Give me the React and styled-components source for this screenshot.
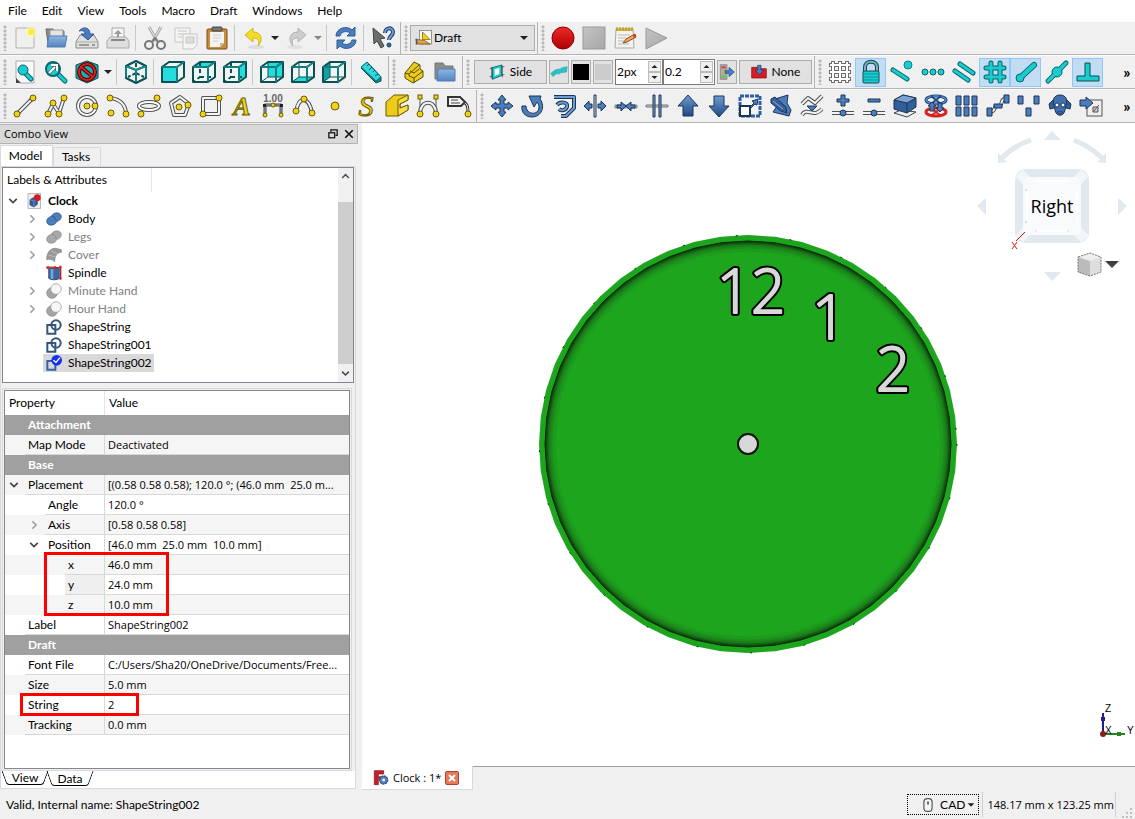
import React from "react"
import styled, { createGlobalStyle, css } from "styled-components"

/* ---------- drawing helpers ---------- */

const TEAL = "#18cccf"
const YELLOW = "#f0d21c"
const BLUE = "#4a7dbb"
const NAVY = "#1d3557"

const Pipe = ({ d, c = "#f4f4f2", o = "#4d5355", w = 3 }) => (
  <g fill="none" strokeLinejoin="round">
    <path d={d} stroke={o} strokeWidth={w} />
    <path d={d} stroke={c} strokeWidth={w - 2} />
  </g>
)

const Dot = ({ x, y, r = 3, c = YELLOW, o = "#6b5d00" }) => (
  <circle cx={x} cy={y} r={r} fill={c} stroke={o} />
)

const Bar = ({ d, w = 5, c = TEAL, o = "#0b6468" }) => (
  <g fill="none" strokeLinecap="round">
    <path d={d} stroke={o} strokeWidth={w} />
    <path d={d} stroke={c} strokeWidth={w - 2} />
  </g>
)

const cubeFaces = {
  front: "M1 7H16V22H1Z",
  top: "M1 7L8 2H23L16 7Z",
  right: "M16 7L23 2V17L16 22Z",
  rear: "M8 2H23V17H8Z",
  bottom: "M1 22L8 17H23L16 22Z",
  left: "M1 7L8 2V17L1 22Z",
}

const Cube = ({ face }) => {
  const solid = face === "rear" || face === "bottom" || face === "left"
  return (
    <g strokeLinejoin="round">
      <path d="M1 7L8 2H23V17L16 22H1Z" fill="#eef6f6" />
      <path d={cubeFaces[face]} fill={face === "left" ? "#0fa3a6" : "#22dcdd"} />
      {face !== "front" && (
        <path
          d="M8 2V17L1 22M8 17H23"
          fill="none"
          stroke="#0b4f53"
          strokeWidth={solid ? 1 : 2}
          strokeDasharray={solid ? "none" : "4 3"}
        />
      )}
      <path
        d="M1 7H16V22H1ZM1 7L8 2H23L16 7M23 2V17L16 22"
        fill="none"
        stroke="#0b4f53"
        strokeWidth="2"
      />
      <path d="M1 7H16V22M16 7L23 2" fill="none" stroke="#1fa9ad" strokeWidth="1" />
      {face === "front" && <path d="M3 9H14V20H3Z" fill="#22dcdd" />}
    </g>
  )
}

const icons = {
  new: (
    <g>
      <rect x="3" y="2" width="18" height="20" rx="1" fill="#efefed" stroke="#b0b0ac" />
      <circle cx="18" cy="6" r="6" fill="#fdf6a0" opacity=".6" />
      <circle cx="18" cy="6" r="3" fill="#fbec3a" />
    </g>
  ),
  open: (
    <g>
      <path d="M2 3H9L11 5H20V17H4Z" fill="#8b8b87" stroke="#666" />
      <path d="M6 4H19V12H6Z" fill="#e4e4e4" stroke="#999" />
      <path d="M5 10H23L21 21H3Z" fill="url(#gBlue)" stroke="#4f7fb9" />
    </g>
  ),
  save: (
    <g>
      <path d="M5 9H19L23 16V22H1V16Z" fill="#e0e0de" stroke="#8b8b87" />
      <path d="M2 16H22" stroke="#aaa" />
      <path d="M4 19H14M17 19H20" stroke="#9b9b97" strokeWidth="2" />
      <path d="M4 5C8 0 15 1 15 8H19L13 14L6 8H10C10 5 8 4 4 5Z" fill={BLUE} stroke="#2c5a99" />
    </g>
  ),
  print: (
    <g stroke="#aaa">
      <path d="M6 2H18V13H6Z" fill="#f6f6f6" />
      <path d="M4 11H20L23 15V22H1V15Z" fill="#dededc" />
      <path d="M5 14H19" stroke="#888" strokeWidth="2" />
      <path d="M12 4L8 8H11V11H13V8H16Z" fill="#999" stroke="none" />
    </g>
  ),
  cut: (
    <g fill="none">
      <path d="M6 1L14 15M18 1L10 15" stroke="#aaa" strokeWidth="3" />
      <path d="M6 1L14 15M18 1L10 15" stroke="#e8e8e8" />
      <circle cx="6" cy="19" r="4" stroke="#777" strokeWidth="2" />
      <circle cx="18" cy="19" r="4" stroke="#777" strokeWidth="2" />
      <path d="M9 16L12 12L15 16" stroke="#777" strokeWidth="2" />
    </g>
  ),
  copy: (
    <g fill="#f4f4f3" stroke="#c6c6c4">
      <path d="M1 2H16V16H1Z" />
      <path d="M4 5H13M4 8H13M4 11H8" />
      <path d="M9 8H23V19L19 23H9Z" />
      <path d="M12 11H20V17H12Z" fill="#ddd" />
    </g>
  ),
  paste: (
    <g>
      <rect x="2" y="3" width="20" height="20" rx="1" fill="#c88d3a" stroke="#7a5116" />
      <path d="M5 6H19V17L15 21H5Z" fill="#f3f3f3" />
      <path d="M8 9H16M8 12H16M8 15H13" stroke="#ccc" />
      <path d="M15 21V17H19Z" fill="#bbb" />
      <rect x="7" y="1" width="10" height="4" rx="1" fill="#777" stroke="#444" />
    </g>
  ),
  undo: (
    <g>
      <ellipse cx="14" cy="21" rx="8" ry="2" fill="#ddd" />
      <path d="M3 9L11 2V6C19 6 22 13 16 20C18 14 16 12 11 12V16Z" fill="#f2dc2a" stroke="#d4b713" />
    </g>
  ),
  redo: (
    <g>
      <ellipse cx="10" cy="21" rx="8" ry="2" fill="#e2e2e2" />
      <path d="M21 9L13 2V6C5 6 2 13 8 20C6 14 8 12 13 12V16Z" fill="#cdcdcb" stroke="#b3b3b1" />
    </g>
  ),
  refresh: (
    <g fill={BLUE} stroke="#2c5a99">
      <path d="M2 10C2 2 13 -1 18 4L21 1V10H13L16 7C12 4 7 6 6 10Z" />
      <path d="M22 14C22 22 11 25 6 20L3 23V14H11L8 17C12 20 17 18 18 14Z" />
    </g>
  ),
  whats: (
    <g>
      <path d="M2 2L14 12L9 13L13 20L10 22L6 15L3 18Z" fill="#6a6e6e" stroke="#3e4446" />
      <path d="M14 7C14 1 22 1 22 6C22 10 18 10 18 14" fill="none" stroke="#1c3c72" strokeWidth="4" />
      <path d="M14 7C14 1 22 1 22 6C22 10 18 10 18 14" fill="none" stroke="#6f9bd1" strokeWidth="2" />
      <circle cx="18" cy="19" r="2" fill="#3465a4" stroke="#1c3c72" />
    </g>
  ),
  record: <circle cx="12" cy="12" r="11" fill="url(#gRed)" stroke="#8a0000" />,
  stop: <rect x="1" y="1" width="22" height="22" fill="url(#gGrey)" stroke="#999" />,
  macro: (
    <g>
      <path d="M3 3H20L21 22H2Z" fill="#f2f2ef" stroke="#aaa" />
      <path d="M3 2H20V5H3Z" fill="#d9c04a" />
      <path d="M4 1V5M7 1V5M10 1V5M13 1V5M16 1V5M19 1V5" stroke="#9b8a30" />
      <path d="M5 9H17M5 12H13M5 15H11M5 18H16" stroke="#bbb" />
      <path d="M10 17L13 13L22 8L23 11L14 16Z" fill="#e9a85a" stroke="#8f4f16" />
      <path d="M20 9L22 8L23 11L21 12Z" fill="#d33" />
    </g>
  ),
  play: <path d="M2 2L23 12L2 23Z" fill="url(#gGrey)" stroke="#999" />,
  fitAll: (
    <g>
      <path d="M3 1H21V23H7L3 19Z" fill="#fafafa" stroke="#aaa" />
      <path d="M3 18L8 23H3Z" fill="#444" />
      <Bar d="M13 14L18 19" w={5} />
      <circle cx="10" cy="10" r="5" fill={TEAL} stroke="#0b6468" />
    </g>
  ),
  fitSel: (
    <g>
      <Bar d="M13 13L21 21" w={5} />
      <circle cx="9" cy="9" r="7" fill={TEAL} stroke="#0b6468" strokeWidth="2" />
      <path d="M5 13L11 7M7 5H13V11" stroke="#444" strokeWidth="3" fill="none" />
      <path d="M5 13L11 7M7 5H13V11" stroke="#fff" strokeWidth="2" fill="none" />
    </g>
  ),
  drawStyle: (
    <g>
      <path d="M12 1L23 5V18L12 23L1 18V5Z" fill="#16aeb1" stroke="#0b4f53" />
      <circle cx="12" cy="12" r="8" fill="none" stroke="#4d0000" strokeWidth="4" />
      <path d="M6 7L18 17" stroke="#4d0000" strokeWidth="4" />
      <circle cx="12" cy="12" r="8" fill="none" stroke="#d92020" strokeWidth="2" />
      <path d="M6 7L18 17" stroke="#d92020" strokeWidth="2" />
    </g>
  ),
  iso: (
    <g fill="none" stroke="#0b4f53" strokeWidth="2" strokeLinejoin="round">
      <path d="M12 1L22 6V18L12 23L2 18V6Z" fill="#eef6f6" />
      <path d="M2 6L12 10L22 6M12 10V23" />
      <path d="M12 3V7M12 13L4 17M12 13L20 17" strokeDasharray="4 2" />
      <path d="M2 6L12 10L22 6M12 10V22M2 7V17M22 7V17" stroke="#1fa9ad" strokeWidth="1" />
    </g>
  ),
  front: <Cube face="front" />,
  top: <Cube face="top" />,
  right: <Cube face="right" />,
  rear: <Cube face="rear" />,
  bottom: <Cube face="bottom" />,
  left: <Cube face="left" />,
  measure: (
    <g strokeLinejoin="round">
      <path d="M8 2L22 17V21L17 23L2 8Z" fill="#0e9396" stroke="#0b4f53" />
      <path d="M8 2L22 17L17 21L2 7Z" fill="#2cd9dc" stroke="#0b6468" />
      <path d="M10 4L8 6M13 7L10 10M16 10L14 12M19 14L16 16" stroke="#0b4f53" />
    </g>
  ),
  part: (
    <g fill="#eacb1e" stroke="#5a4e00" strokeLinejoin="round">
      <path d="M3 13L12 2L18 5V9L21 11V17L11 23L3 18Z" />
      <path d="M3 13L7 14L17 5M7 14V16L12 18L21 11M12 18V23M8 11L12 13L17 9" fill="none" />
    </g>
  ),
  group: (
    <g>
      <path d="M2 3H10L12 6H20V19H2Z" fill="#8a8c88" stroke="#777" />
      <path d="M5 9H22V21H4Z" fill="url(#gBlue)" stroke="#4f7fb9" />
    </g>
  ),
  draft: (
    <g>
      <rect x="6" y="2" width="16" height="18" fill="#f8f8f8" stroke="#777" />
      <path d="M10 4V14H20Z" fill="#f0d21c" stroke="#7c6c00" />
      <path d="M1 14L12 15L20 20H4Z" fill="#e6a04b" stroke="#7c4c0c" />
      <path d="M2 13V21" stroke="#555" strokeWidth="2" />
    </g>
  ),
  side: (
    <g>
      <path d="M4 4V22M20 2V20M1 7L23 4M1 19L23 16" stroke="#333" />
      <path d="M7 7L17 4V16L7 20Z" fill="none" stroke="#0b4f53" strokeWidth="5" />
      <path d="M7 7L17 4V16L7 20Z" fill="#fff" stroke={TEAL} strokeWidth="3" />
    </g>
  ),
  construct: (
    <path d="M1 14L7 9L13 8L17 6L23 5L22 12L14 13L12 15L9 14L4 18Z" fill="#22c4c7" stroke="#4da9ab" />
  ),
  apply: (
    <g>
      <path d="M2 1H12V23H2Z" fill="#aaa" stroke="#777" />
      <path d="M4 5H10" stroke="#e33" strokeWidth="3" />
      <path d="M4 12H10" stroke="#dcb91e" strokeWidth="3" />
      <path d="M4 19H10" stroke="#6c3" strokeWidth="3" />
      <path d="M9 10H15V5L23 12L15 19V14H9Z" fill={BLUE} stroke="#204a87" />
    </g>
  ),
  autogroup: (
    <g>
      <path d="M1 5H9L11 7H23V21H1Z" fill="#d61c24" stroke="#8a0008" />
      <path d="M10 2H15V9H19L13 16L6 9H10Z" fill={BLUE} stroke="#16335e" />
    </g>
  ),
  grid: (
    <g fill="none">
      <path d="M5 1V23M12 1V23M19 1V23M1 5H23M1 12H23M1 19H23" stroke="#6d6d6d" strokeWidth="4" />
      <path d="M5 2V22M12 2V22M19 2V22M2 5H22M2 12H22M2 19H22" stroke="#fff" strokeWidth="2" />
    </g>
  ),
  lock: (
    <g>
      <path d="M6 12V7C6 0 18 0 18 7V12" fill="none" stroke="#0b4f53" strokeWidth="4" />
      <path d="M6 12V7C6 0 18 0 18 7V12" fill="none" stroke="#8ab" strokeWidth="2" />
      <rect x="4" y="11" width="16" height="12" rx="1" fill={TEAL} stroke="#0b4f53" />
      <path d="M5 14H19M5 17H19M5 20H19" stroke="#0c9497" />
    </g>
  ),
  snapNear: (
    <g>
      <Bar d="M3 10L17 19" w={5} />
      <Dot x={18} y={5} r={4} c={TEAL} o="#0a8386" />
    </g>
  ),
  snapExt: (
    <g>
      <Dot x={4} y={12} c={TEAL} o="#0b6468" />
      <Dot x={12} y={12} c={TEAL} o="#0b6468" />
      <Dot x={20} y={12} c={TEAL} o="#0b6468" />
    </g>
  ),
  snapPar: (
    <g>
      <Bar d="M8 4L21 13" />
      <Bar d="M3 11L16 20" />
    </g>
  ),
  snapGrid: (
    <g>
      <Bar d="M8 3V21M17 3V21M3 8H21M3 17H21" w={5} />
    </g>
  ),
  snapEnd: (
    <g>
      <Bar d="M7 17L20 5" w={6} />
      <Dot x={6} y={18} r={4} c={TEAL} o="#0b6468" />
      <Bar d="M7 17L20 5" w={4} o={TEAL} />
    </g>
  ),
  snapMid: (
    <g>
      <Bar d="M3 21L21 3" w={5} />
      <Dot x={12} y={12} r={5} c={TEAL} o="#0b6468" />
      <Bar d="M5 19L19 5" w={3} o={TEAL} />
    </g>
  ),
  snapPerp: <path d="M9 3H14V16H23V21H1V16H9Z" fill={TEAL} stroke="#0b4f53" />,
  line: (
    <g>
      <Pipe d="M4 20L20 4" w={4} />
      <Dot x={4} y={20} />
      <Dot x={20} y={4} />
    </g>
  ),
  wire: (
    <g>
      <Pipe d="M4 20L9 10L15 19L20 4" w={4} />
      <Dot x={4} y={20} />
      <Dot x={9} y={9} />
      <Dot x={15} y={20} />
      <Dot x={20} y={4} />
    </g>
  ),
  circle: (
    <g>
      <circle cx="12" cy="12" r="9" fill="none" stroke="#4d5355" strokeWidth="4" />
      <circle cx="12" cy="12" r="9" fill="none" stroke="#fff" strokeWidth="2" />
      <Dot x={12} y={12} />
      <Dot x={20} y={12} />
    </g>
  ),
  arc: (
    <g>
      <Pipe d="M4 4C14 5 20 11 20 20" w={4} />
      <Dot x={4} y={4} />
      <Dot x={5} y={19} />
      <Dot x={20} y={20} />
    </g>
  ),
  ellipse: (
    <g>
      <ellipse cx="12" cy="12" rx="10" ry="4" fill="none" stroke="#4d5355" strokeWidth="4" />
      <ellipse cx="12" cy="12" rx="10" ry="4" fill="none" stroke="#fff" strokeWidth="2" />
      <Dot x={4} y={20} />
      <Dot x={20} y={4} />
    </g>
  ),
  polygon: (
    <g>
      <Pipe d="M12 3L21 10L17 21H6L3 9Z" w={4} />
      <Dot x={11} y={13} />
      <Dot x={20} y={11} />
    </g>
  ),
  rect: (
    <g>
      <Pipe d="M4 4H20V20H4Z" w={4} />
      <Dot x={4} y={20} />
      <Dot x={20} y={4} />
    </g>
  ),
  text: (
    <text x="12" y="21" textAnchor="middle" fontSize="26" fontWeight="700" fontStyle="italic" fill={YELLOW} stroke="#6b5d00" fontFamily="Liberation Serif, serif">A</text>
  ),
  dim: (
    <g>
      <text x="12" y="8" textAnchor="middle" fontSize="10" fontWeight="700" fill="#666" fontFamily="Liberation Sans, sans-serif">1.00</text>
      <Pipe d="M4 20V11H20V20" w={3} o="#444" c="#aaa" />
      <path d="M2 10H5V13H2ZM19 10H22V13H19Z" fill="#222" />
      <Dot x={12} y={11} r={2} />
      <Dot x={4} y={21} r={2} />
      <Dot x={20} y={21} r={2} />
    </g>
  ),
  bspline: (
    <g>
      <Pipe d="M4 18C6 2 17 2 20 19" w={4} />
      <Dot x={4} y={17} />
      <Dot x={12} y={5} />
      <Dot x={20} y={19} />
    </g>
  ),
  point: <Dot x={12} y={12} r={4} />,
  shapeString: (
    <text x="12" y="22" textAnchor="middle" fontSize="30" fontStyle="italic" fill={YELLOW} stroke="#6b5d00" fontFamily="Liberation Serif, serif">S</text>
  ),
  facebinder: (
    <g stroke="#6b5d00" fill="#eccb1b" strokeLinejoin="round">
      <path d="M1 8L9 1H23V6L15 10V14L23 11V16L13 22H1Z" />
      <path d="M13 6L23 1V6L15 10V14L23 11V16L13 22Z" fill="#f6e04a" />
    </g>
  ),
  bezier: (
    <g>
      <path d="M4 3V20M20 3V20" stroke="#555" />
      <Pipe d="M4 20C4 5 20 5 20 20" w={4} />
      <rect x="2" y="1" width="4" height="4" fill={YELLOW} stroke="#6b5d00" />
      <rect x="18" y="1" width="4" height="4" fill={YELLOW} stroke="#6b5d00" />
      <Dot x={4} y={20} />
      <Dot x={20} y={20} />
    </g>
  ),
  label: (
    <g>
      <Pipe d="M15 9C20 8 21 12 21 18" w={3} o="#333" />
      <path d="M1 3H13L18 8L14 12H1Z" fill="#f4f4f4" stroke="#333" strokeWidth="2" />
      <path d="M4 6H11M4 9H13" stroke="#444" />
      <Dot x={21} y={20} />
    </g>
  ),
  move: (
    <path d="M12 1L16 6H14V10H18V8L23 12L18 16V14H14V18H16L12 23L8 18H10V14H6V16L1 12L6 8V10H10V6H8Z" fill={BLUE} stroke={NAVY} />
  ),
  rotate: (
    <path d="M8 2H20L19 5C25 13 20 23 11 23C4 23 0 18 1 12L5 12C5 21 18 22 18 13C18 11 17 9 16 8L13 13Z" fill={BLUE} stroke={NAVY} />
  ),
  offset: (
    <g>
      <Pipe d="M2 3H22V14L14 22H9" c="#6c9bd0" o={NAVY} w={4} />
      <Pipe d="M5 11C8 7 17 8 15 13C13 17 9 17 7 15" c="#6c9bd0" o={NAVY} w={4} />
    </g>
  ),
  trim: (
    <g fill={BLUE} stroke={NAVY}>
      <path d="M11 1H13V23H11Z" fill="#cdd" />
      <path d="M1 12L6 7V10H9V14H6V17ZM23 12L18 7V10H15V14H18V17Z" />
    </g>
  ),
  join: (
    <g fill={BLUE} stroke={NAVY}>
      <path d="M1 11H23V14H1Z" fill="#bbb" stroke="#888" />
      <path d="M12 12L7 8V11H3V14H7V17ZM12 12L17 8V11H21V14H17V17Z" />
    </g>
  ),
  split: (
    <g stroke={NAVY}>
      <path d="M1 11H23V13H1Z" fill="#ccc" stroke="#777" />
      <path d="M8 1H10V23H8ZM14 1H16V23H14Z" fill="#7ca3d0" />
    </g>
  ),
  up: <path d="M12 1L22 12H17V22H7V12H2Z" fill="url(#gNavy)" stroke={NAVY} />,
  down: <path d="M12 23L22 12H17V2H7V12H2Z" fill="url(#gNavy)" stroke={NAVY} />,
  scale: (
    <g>
      <rect x="2" y="2" width="20" height="20" fill="#f4f4f4" stroke="#2c5fa3" strokeWidth="3" strokeDasharray="4 1" />
      <rect x="2" y="12" width="10" height="10" fill="#fff" stroke={NAVY} strokeWidth="2" />
      <path d="M12 13L16 9L14 7L20 5L19 11L17 10L13 14Z" fill={BLUE} stroke={NAVY} />
    </g>
  ),
  edit: (
    <g fill={BLUE} stroke={NAVY}>
      <path d="M6 5L19 1L18 9L22 16L20 22L4 18L8 12Z" />
      <path d="M2 5L6 3L17 13L18 19L12 17L2 9Z" fill="#345f98" />
      <path d="M4 7L14 15" stroke="#8fb4de" />
    </g>
  ),
  wireToB: (
    <g>
      <Pipe d="M2 10L8 4L15 9L22 2" w={4} />
      <Pipe d="M2 21C7 12 13 25 22 15" w={4} />
      <path d="M7 12H17L12 17Z" fill={BLUE} stroke={NAVY} />
    </g>
  ),
  addPoint: (
    <g>
      <Pipe d="M1 19H23" w={4} />
      <Dot x={12} y={19} r={3} c={BLUE} o={NAVY} />
      <path d="M10 1H14V5H18V8H14V12H10V8H6V5H10Z" fill={BLUE} stroke={NAVY} />
    </g>
  ),
  delPoint: (
    <g>
      <Pipe d="M1 19H23" w={4} />
      <Dot x={12} y={19} r={3} c={BLUE} o={NAVY} />
      <path d="M6 5H18V8H6Z" fill={BLUE} stroke={NAVY} />
    </g>
  ),
  shape2d: (
    <g>
      <path d="M1 19L8 16L23 18L14 23Z" fill="#eee" stroke="#444" />
      <path d="M1 6L10 1L23 4V13L14 19L1 15Z" fill="#315f9c" stroke={NAVY} />
      <path d="M1 6L10 1L23 4L14 9Z" fill="#7ca3d0" stroke={NAVY} />
      <path d="M14 9V19" stroke={NAVY} />
    </g>
  ),
  toSketch: (
    <g fill="none">
      <ellipse cx="12" cy="6" rx="10" ry="4" stroke="#204a87" strokeWidth="3" />
      <ellipse cx="12" cy="6" rx="10" ry="4" stroke="#7ca3d0" />
      <path d="M7 2L17 10M17 2L7 10" stroke="#204a87" strokeWidth="2" />
      <ellipse cx="12" cy="18" rx="10" ry="4" stroke="#d42222" strokeWidth="3" />
      <path d="M7 22L17 14M17 22L7 14" stroke="#d42222" strokeWidth="2" />
      <path d="M6 17V12H4L8 8L12 12H10V17ZM14 9V14H12L16 18L20 14H18V9Z" fill={BLUE} stroke={NAVY} />
    </g>
  ),
  array: (
    <g fill={BLUE} stroke={NAVY}>
      <path d="M1 2H6V11H1ZM9 2H14V11H9ZM17 2H22V11H17ZM1 13H6V22H1ZM9 13H14V22H9ZM17 13H22V22H17Z" />
    </g>
  ),
  pathArray: (
    <g fill={BLUE} stroke={NAVY}>
      <Pipe d="M4 17C10 19 7 11 12 12C18 13 13 4 20 5" w={4} />
      <path d="M1 14H6V22H1ZM8 10H16V14H8ZM18 1H23V9H18Z" />
    </g>
  ),
  pointArray: (
    <path d="M1 2H6V10H1ZM17 2H22V10H17ZM9 14H14V22H9Z" fill={BLUE} stroke={NAVY} />
  ),
  clone: (
    <g stroke={NAVY}>
      <path d="M6 5L1 10L2 15L6 14M18 5L23 10L22 15L18 14" fill="#315f9c" />
      <path d="M12 1C18 1 20 6 18 11L17 16C16 23 8 23 7 16L6 11C4 6 6 1 12 1Z" fill="#3f6fae" />
      <circle cx="9" cy="11" r="2" fill="#fff" />
      <circle cx="15" cy="11" r="2" fill="#fff" />
      <path d="M9 18H15L12 20Z" fill="#8fb4de" />
    </g>
  ),
  drawing: (
    <g>
      <rect x="8" y="6" width="15" height="16" fill="#eee" stroke="#555" />
      <path d="M14 13H19V18H14ZM14 18L20 11" fill="#ccc" stroke="#555" />
      <path d="M1 6H7V3L14 9L7 15V12H1Z" fill={BLUE} stroke={NAVY} />
    </g>
  ),
  doc: (
    <g>
      <rect x="3" y="1" width="19" height="22" fill="#efefef" stroke="#999" />
      <path d="M6 10L11 7L17 9V17L12 21L6 18Z" fill="#2d5f9e" stroke={NAVY} />
      <path d="M6 10L12 12L17 9M12 12V21" stroke="#7ca3d0" fill="none" />
      <circle cx="17" cy="7" r="5" fill="#d31b1b" />
    </g>
  ),
  fusion: (
    <g fill={BLUE} stroke="#234d80">
      <path d="M8 8C11 1 22 1 23 8C23 13 19 15 16 16C13 23 2 23 1 16C1 11 5 9 8 8Z" />
      <path d="M9 8C13 8 15 11 15 15" fill="none" />
    </g>
  ),
  fusionGrey: (
    <g fill="#a8a8a8" stroke="#858585">
      <path d="M8 8C11 1 22 1 23 8C23 13 19 15 16 16C13 23 2 23 1 16C1 11 5 9 8 8Z" />
      <path d="M9 8C13 8 15 11 15 15" fill="none" />
    </g>
  ),
  sweep: (
    <g>
      <path d="M1 19C1 9 6 2 14 2L23 4V8C17 8 13 13 13 22C9 18 5 18 1 19Z" fill="#9a9a9a" stroke="#777" />
      <path d="M4 12L14 15M8 6L17 10" stroke="#ccc" />
    </g>
  ),
  cylinder: (
    <g>
      <path d="M4 5H20V20C17 23 7 23 4 20Z" fill="#3969a5" stroke="#173359" />
      <path d="M9 6V21" stroke="#79a3d1" strokeWidth="4" />
      <path d="M1 4C8 1 16 6 22 3V21" fill="none" stroke="#c81b1b" strokeWidth="2" />
      <path d="M1 2H4V6H1ZM12 2H15V6H12ZM20 1H23V5H20ZM20 18H23V22H20Z" fill="#d81b1b" />
    </g>
  ),
  cutOp: (
    <g>
      <circle cx="9" cy="15" r="8" fill="#a5a5a5" stroke="#808080" />
      <circle cx="15" cy="9" r="8" fill="#f6f6f6" stroke="#8f8f8f" />
    </g>
  ),
  sketch: (
    <g fill="none" stroke="#34547b" strokeWidth="3">
      <path d="M2 9H14V22H2Z" />
      <circle cx="15" cy="9" r="7" />
    </g>
  ),
  sketchOn: (
    <g fill="none" stroke="#3465a4" strokeWidth="3">
      <path d="M2 9H14V22H2Z" />
      <circle cx="16" cy="8" r="8" fill="#1432ee" stroke="none" />
      <path d="M11 8L15 11L21 4" stroke="#fff" strokeWidth="2" />
    </g>
  ),
  freecad: (
    <g>
      <path d="M2 1H16V6H8V10H14V14H8V22H2Z" fill="#c61f24" stroke="#7b0d11" />
      <circle cx="16" cy="15" r="6" fill="#5b84bd" stroke="#2b4f85" strokeWidth="2" strokeDasharray="3 1" />
      <circle cx="16" cy="15" r="2" fill="#fff" />
    </g>
  ),
  mouse: (
    <g fill="none" stroke="#4d5455" strokeWidth="2">
      <rect x="5" y="1" width="14" height="22" rx="6" fill="#f4f4f4" />
      <path d="M12 6V11" strokeWidth="3" />
    </g>
  ),
  restore: (
    <g fill="none" stroke="#111" strokeWidth="3">
      <path d="M7 8V2H22V15H18" />
      <rect x="2" y="9" width="14" height="12" />
    </g>
  ),
  close: <path d="M3 3L21 21M21 3L3 21" stroke="#111" strokeWidth="4" />,
  caretDown: <path d="M4 8H20L12 16Z" fill="#222" />,
  open1: <path d="M3 7L12 16L21 7" fill="none" stroke="#444" strokeWidth="4" />,
  shut: <path d="M8 3L17 12L8 21" fill="none" stroke="#a0a0a0" strokeWidth="4" />,
  up1: <path d="M3 16L12 7L21 16" fill="none" stroke="#505050" strokeWidth="4" />,
}

const Svg = styled.svg`
  display: block;
  flex: none;
  overflow: visible;
`

const Icon = ({ name, size = 24 }) => (
  <Svg width={size} height={size} viewBox="0 0 24 24" aria-hidden="true">
    {icons[name]}
  </Svg>
)

const Defs = styled.svg`
  position: absolute;
`

const Gradients = () => (
  <Defs width="0" height="0" aria-hidden="true">
    <linearGradient id="gBlue" x1="0" y1="0" x2="0" y2="1">
      <stop offset="0" stopColor="#8fb7e3" />
      <stop offset="1" stopColor="#5483be" />
    </linearGradient>
    <linearGradient id="gNavy" x1="0" y1="0" x2="0" y2="1">
      <stop offset="0" stopColor="#6d9bd0" />
      <stop offset="1" stopColor="#204a87" />
    </linearGradient>
    <linearGradient id="gGrey" x1="0" y1="0" x2="1" y2="1">
      <stop offset="0" stopColor="#c4c4c4" />
      <stop offset="1" stopColor="#a6a6a6" />
    </linearGradient>
    <linearGradient id="gRed" x1="0" y1="0" x2="0" y2="1">
      <stop offset="0" stopColor="#ef2929" />
      <stop offset="1" stopColor="#b00000" />
    </linearGradient>
  </Defs>
)

/* ---------- styles ---------- */

const GlobalStyle = createGlobalStyle`
  * {
    box-sizing: border-box;
  }

  body {
    margin: 0;
    background: #f0f0f0;
  }

  body, button, input, select, table {
    color: #000;
    font-family: Lato, "Open Sans", sans-serif;
    font-size: 12px;
    line-height: 18px;
  }

  button {
    padding: 0;
    border: 0;
    background: none;
  }
`

const Window = styled.div`
  display: flex;
  flex-direction: column;
  min-height: 100vh;
`

const MenuBar = styled.nav`
  display: flex;
  height: 21px;
  background: #fff;

  & button {
    padding: 1px 7px 0 8px;
    white-space: nowrap;
  }
`

const ToolRow = styled.div`
  display: flex;
  height: 34px;
  border-bottom: 1px solid #b4b4b4;
  border-top: 1px solid #fafafa;
`

const ToolBar = styled.div`
  display: flex;
  align-items: center;
  padding-right: 2px;
  border-right: 1px solid #b4b4b4;
  ${(props) =>
    props.$fill &&
    css`
      flex: 1;
      padding-right: 1px;
      border-right: 0;
    `}
`

const Grip = styled.span`
  width: 9px;
  height: 26px;
  flex: none;
  background: radial-gradient(circle at 5px 2px, #b8b8b8 1px, transparent 2px)
    0 0 / 9px 4px repeat-y;
`

const Tool = styled.button`
  display: flex;
  align-items: center;
  justify-content: center;
  flex: none;
  width: 31px;
  height: 29px;
  ${(props) =>
    props.$on &&
    css`
      background: #c2dcf3;
      border: 1px solid #90c8f6;
    `}
`

const DropArrow = styled.button`
  display: flex;
  align-items: center;
  justify-content: center;
  width: 12px;
  height: 29px;
  opacity: ${(props) => (props.$dim ? 0.5 : 1)};
`

const Separator = styled.span`
  width: 1px;
  height: 26px;
  margin: 0 3px 0 2px;
  background: #c8c8c8;
`

const More = styled.button`
  width: 14px;
  margin-left: auto;
  font-size: 16px;
  font-weight: 700;
`

const Workbench = styled.label`
  display: flex;
  align-items: center;
  width: 125px;
  height: 26px;
  padding: 0 4px;
  border: 1px solid #adadad;
  background: #e1e1e1;

  & select {
    appearance: none;
    flex: 1;
    min-width: 0;
    padding: 0 1px;
    border: 0;
    background: none;
  }
`

const TrayGroup = styled.div`
  display: flex;
  align-items: center;
  gap: 2px;
  padding-left: 2px;
`

const TrayButton = styled.button`
  display: flex;
  align-items: center;
  justify-content: center;
  gap: 5px;
  width: ${(props) => (props.$wide ? 73 : 20)}px;
  height: 24px;
  border: 1px solid #adadad;
  background: #e1e1e1;
`

const Swatch = styled.span`
  width: 16px;
  height: 16px;
  background: ${(props) => props.$color};
`

const SpinGroup = styled.span`
  display: flex;
`

const Spin = styled.span`
  display: flex;
  width: ${(props) => props.$width}px;
  height: 26px;
  border: 1px solid #7a7a7a;
  background: #fff;

  & input {
    flex: 1;
    min-width: 0;
    padding: 0 1px;
    border: 0;
    background: none;
    outline: 0;
  }
`

const SpinButtons = styled.span`
  display: grid;
  width: 14px;
  padding: 1px 1px 1px 0;

  & button {
    display: flex;
    align-items: center;
    justify-content: center;
    border: 1px solid #bbb;
    background: #f0f0f0;
  }

  & button:first-child svg {
    transform: rotate(180deg);
  }
`

const Main = styled.main`
  display: flex;
  flex: 1;
  gap: 4px;
`

const Dock = styled.aside`
  display: flex;
  flex-direction: column;
  flex: none;
  width: 358px;
  padding: 1px 0;
`

const DockTitle = styled.header`
  display: flex;
  align-items: center;
  gap: 6px;
  height: 20px;
  padding: 0 3px 0 4px;
  border: 1px solid #b4b4b4;
  border-left: 0;
  background: #d9d9d9;
  font-family: "Open Sans", sans-serif;
  font-size: 11px;

  & span {
    flex: 1;
  }
`

const TabRow = styled.div`
  display: flex;
  align-items: flex-end;
  height: 22px;
`

const Tab = styled.button`
  width: ${(props) => (props.$on ? 53 : 48)}px;
  height: ${(props) => (props.$on ? 21 : 19)}px;
  padding-right: 2px;
  border: 1px solid #d9d9d9;
  border-bottom: 0;
  background: ${(props) => (props.$on ? "#fff" : "#f0f0f0")};
`

const Pane = styled.div`
  display: flex;
  flex-direction: column;
  flex: 1;
  width: 356px;
  border: 1px solid #d9d9d9;
  background: #f0f0f0;
`

const TreeBox = styled.section`
  display: flex;
  width: 352px;
  height: 216px;
  margin-left: 1px;
  border: 1px solid #828790;
  background: #fff;
`

const Tree = styled.div`
  flex: 1;
`

const TreeHead = styled.div`
  width: 149px;
  height: 24px;
  padding: 3px 4px 0;
  border-right: 1px solid #e5e5e5;
`

const TreeRow = styled.div`
  display: flex;
  align-items: center;
  height: 18px;
  padding-left: ${(props) => (props.$root ? 0 : 18)}px;
  color: ${(props) => (props.$hidden ? "#808080" : "#000")};
  font-weight: ${(props) => (props.$root ? 700 : 400)};
`

const Expander = styled.span`
  display: flex;
  align-items: center;
  justify-content: center;
  width: ${(props) => (props.$root ? 20 : 22)}px;
`

const TreeItem = styled.span`
  display: flex;
  align-items: center;
  gap: 6px;
  height: 18px;
  padding: 0 2px 0 3px;
  background: ${(props) => (props.$selected ? "#d9d9d9" : "none")};
`

const ScrollBar = styled.div`
  display: flex;
  flex-direction: column;
  justify-content: space-between;
  align-items: center;
  width: 15px;
  padding: 4px 0;
  background: linear-gradient(#cdcdcd, #cdcdcd) 0 34px / 15px 162px no-repeat
    #f0f0f0;
`

const PropertyPane = styled.section`
  display: flex;
  flex: 1;
  width: 350px;
  margin: 5px 0 0 1px;
  padding: 1px;
  border: 1px solid #d9d9d9;
`

const PropertyBox = styled.div`
  position: relative;
  flex: 1;
  border: 1px solid #828790;
  background: #fff;
`

const PropertyTable = styled.table`
  width: 100%;
  border-spacing: 0;
  table-layout: fixed;

  & th,
  & td {
    padding: 0;
    text-align: left;
    font-weight: 400;
  }

  & thead th {
    height: 24px;
    padding: 0 4px;
  }

  & thead th:first-child {
    width: 100px;
    border-right: 1px solid #e5e5e5;
  }
`

const GroupRow = styled.tr`
  height: 20px;
  background: #a0a0a0;
  color: #fff;

  & & th,
  & th:only-child {
    padding-left: 23px;
    font-weight: 700;
  }
`

const PropertyRow = styled.tr`
  height: 20px;
  line-height: 20px;
  background: ${(props) => (props.$odd ? "#f5f5f5" : "#fff")};
`

const NameCell = styled.div`
  display: flex;
  height: 20px;
`

const Indent = styled.span`
  display: flex;
  align-items: center;
  justify-content: flex-end;
  width: ${(props) => 20 + props.$level * 20}px;
  padding-right: 6px;
`

const Name = styled.span`
  flex: 1;
  padding-left: 3px;
  border-right: 1px solid #d8d8d8;
  border-bottom: 1px solid #d8d8d8;
  background: ${(props) => (props.$shade ? "#efefef" : "none")};
`

const Value = styled.div`
  height: 20px;
  padding-left: 3px;
  border-bottom: 1px solid #d8d8d8;
  font-family: "Open Sans", sans-serif;
  font-size: 11px;
  white-space: pre;
`

const Highlight = styled.div`
  position: absolute;
  top: ${(props) => props.$top}px;
  left: ${(props) => props.$left}px;
  width: ${(props) => props.$width}px;
  height: ${(props) => props.$height}px;
  border: 3px solid #f00;
`

const BottomTabs = styled.div`
  display: flex;
  gap: 3px;
  align-items: flex-start;
  height: 17px;
  padding-left: 3px;
  background: #fff;
`

const SlantTab = styled.button`
  position: relative;
  width: 42px;
  height: ${(props) => (props.$on ? 15 : 14)}px;
  line-height: 14px;

  &::before,
  &::after {
    content: "";
    position: absolute;
    top: 0;
    bottom: 0;
    width: 50%;
    border-bottom: 1px solid #000;
  }

  &::before {
    left: 0;
    border-left: 1px solid #000;
    border-bottom-left-radius: 3px;
    transform: skewX(20deg);
  }

  &::after {
    right: 0;
    border-right: 1px solid #000;
    border-bottom-right-radius: 3px;
    transform: skewX(-20deg);
  }
`

const Work = styled.section`
  display: flex;
  flex-direction: column;
  flex: 1;
  min-width: 0;
`

const Viewport = styled.div`
  position: relative;
  flex: 1;
  min-height: 643px;
  background: #fff;
`

const Scene = styled.svg`
  position: absolute;
  width: 100%;
  height: 100%;
`

const NavCube = styled.svg`
  position: absolute;
  top: 0;
  right: 0;
`

const Axes = styled.svg`
  position: absolute;
  right: 0;
  bottom: 22px;
`

const DocTabs = styled.div`
  display: flex;
  height: 24px;

  &::after {
    content: "";
    flex: 1;
    border-top: 1px solid #a0a0a0;
  }
`

const DocTab = styled.div`
  display: flex;
  align-items: center;
  gap: 4px;
  width: 111px;
  padding-left: 11px;
  border: solid #d9d9d9;
  border-width: 0 1px 1px 0;
  background: #fff;
  font-family: "Open Sans", sans-serif;
  font-size: 11px;
`

const DocClose = styled.button`
  display: flex;
  align-items: center;
  justify-content: center;
  width: 14px;
  height: 14px;
  border: 1px solid #c0392b;
  border-radius: 2px;
  background: #e07b5d;
`

const StatusBar = styled.footer`
  display: flex;
  align-items: center;
  gap: 3px;
  height: 29px;
  padding: 0 1px 0 6px;
`

const StatusText = styled.span`
  flex: 1;
`

const NavStyle = styled.button`
  display: flex;
  align-items: center;
  justify-content: flex-end;
  gap: 1px;
  width: 72px;
  height: 21px;
  padding-right: 2px;
  border: 1px dotted #000;

  & span {
    padding-left: 4px;
  }
`

const Dimensions = styled.span`
  padding: 4px 1px 3px 4px;
  border: solid #d0d0d0;
  border-width: 0 1px;
  font-family: "Open Sans", sans-serif;
  font-size: 11px;
  white-space: nowrap;
`

const SizeGrip = styled.svg`
  align-self: flex-end;
  margin-left: 3px;
`

/* ---------- data ---------- */

const menus = ["File", "Edit", "View", "Tools", "Macro", "Draft", "Windows", "Help"]

// "|" is a separator, "v" and "v-" are drop-down arrows
const fileTools = "new open save print | cut copy paste | undo v redo v- | refresh | whats"
const macroTools = "record stop macro play"
const viewTools = "fitAll fitSel drawStyle v | iso | front top right | rear bottom left | measure"
const snapTools = "grid lock snapNear snapExt snapPar snapGrid snapEnd snapMid snapPerp"
const draftTools =
  "line wire circle arc ellipse polygon rect text dim bspline point shapeString facebinder bezier label"
const modTools =
  "move rotate offset trim join split up down scale edit wireToB addPoint delPoint shape2d toSketch array pathArray pointArray clone drawing"
const activeTools = ["lock", "snapGrid", "snapEnd", "snapPerp"]

const treeItems = [
  { label: "Body", icon: "fusion", children: true },
  { label: "Legs", icon: "fusionGrey", children: true, hidden: true },
  { label: "Cover", icon: "sweep", children: true, hidden: true },
  { label: "Spindle", icon: "cylinder" },
  { label: "Minute Hand", icon: "cutOp", children: true, hidden: true },
  { label: "Hour Hand", icon: "cutOp", children: true, hidden: true },
  { label: "ShapeString", icon: "sketch" },
  { label: "ShapeString001", icon: "sketch" },
  { label: "ShapeString002", icon: "sketchOn", selected: true },
]

const properties = [
  { group: "Attachment" },
  { name: "Map Mode", value: "Deactivated", odd: true },
  { group: "Base" },
  {
    name: "Placement",
    value: "[(0.58 0.58 0.58); 120.0 °; (46.0 mm  25.0 m...",
    odd: true,
    arrow: "open1",
  },
  { name: "Angle", value: "120.0 °", level: 1 },
  { name: "Axis", value: "[0.58 0.58 0.58]", level: 1, odd: true, arrow: "shut" },
  { name: "Position", value: "[46.0 mm  25.0 mm  10.0 mm]", level: 1, arrow: "open1" },
  { name: "x", value: "46.0 mm", level: 2, odd: true },
  { name: "y", value: "24.0 mm", level: 2, shade: true },
  { name: "z", value: "10.0 mm", level: 2, odd: true },
  { name: "Label", value: "ShapeString002" },
  { group: "Draft" },
  { name: "Font File", value: "C:/Users/Sha20/OneDrive/Documents/Free..." },
  { name: "Size", value: "5.0 mm", odd: true },
  { name: "String", value: "2" },
  { name: "Tracking", value: "0.0 mm", odd: true },
]

/* ---------- parts ---------- */

const Tools = ({ list }) =>
  list.split(" ").map((name, i) => {
    if (name === "|") return <Separator key={i} />
    if (name[0] === "v" && name.length < 3)
      return (
        <DropArrow key={i} $dim={name === "v-"} aria-label="More options">
          <Icon name="caretDown" size={12} />
        </DropArrow>
      )
    return (
      <Tool key={i} aria-label={name} $on={activeTools.includes(name)}>
        <Icon name={name} />
      </Tool>
    )
  })

const SpinBox = ({ value, width, label }) => (
  <Spin $width={width}>
    <input aria-label={label} defaultValue={value} />
    <SpinButtons>
      <button aria-label="Increase">
        <Icon name="caretDown" size={9} />
      </button>
      <button aria-label="Decrease">
        <Icon name="caretDown" size={9} />
      </button>
    </SpinButtons>
  </Spin>
)

const ModelTree = () => (
  <TreeBox>
    <Tree>
      <TreeHead>Labels &amp; Attributes</TreeHead>
      <TreeRow $root>
        <Expander $root>
          <Icon name="open1" size={10} />
        </Expander>
        <TreeItem>
          <Icon name="doc" size={16} />
          Clock
        </TreeItem>
      </TreeRow>
      {treeItems.map((item) => (
        <TreeRow key={item.label} $hidden={item.hidden}>
          <Expander>{item.children && <Icon name="shut" size={10} />}</Expander>
          <TreeItem $selected={item.selected}>
            <Icon name={item.icon} size={16} />
            {item.label}
          </TreeItem>
        </TreeRow>
      ))}
    </Tree>
    <ScrollBar>
      <Icon name="up1" size={9} />
      <Icon name="open1" size={9} />
    </ScrollBar>
  </TreeBox>
)

const PropertyEditor = () => (
  <PropertyPane>
    <PropertyBox>
      <PropertyTable>
        <thead>
          <tr>
            <th>Property</th>
            <th>Value</th>
          </tr>
        </thead>
        <tbody>
          {properties.map((row) =>
            row.group ? (
              <GroupRow key={row.group}>
                <th colSpan={2}>{row.group}</th>
              </GroupRow>
            ) : (
              <PropertyRow key={row.name} $odd={row.odd}>
                <td>
                  <NameCell>
                    <Indent $level={row.level || 0}>
                      {row.arrow && <Icon name={row.arrow} size={10} />}
                    </Indent>
                    <Name $shade={row.shade}>{row.name}</Name>
                  </NameCell>
                </td>
                <td>
                  <Value>{row.value}</Value>
                </td>
              </PropertyRow>
            )
          )}
        </tbody>
      </PropertyTable>
      <Highlight $top={161} $left={39} $width={125} $height={64} />
      <Highlight $top={302} $left={15} $width={119} $height={23} />
    </PropertyBox>
  </PropertyPane>
)

const ring = (r, sides) =>
  Array.from({ length: sides }, (_, i) => {
    const a = (i * 2 * Math.PI) / sides
    return `${386 + r * Math.cos(a)},${321 + r * Math.sin(a)}`
  }).join(" ")

// black outline pass first, then the grey body of the numerals
const Numeral = ({ x, y, children }) => (
  <g
    fontFamily="Open Sans, sans-serif"
    fontSize="60"
    fontWeight="300"
    strokeLinejoin="round"
    textAnchor="middle"
  >
    <text x={x} y={y} fill="#000" stroke="#000" strokeWidth="6">
      {children}
    </text>
    <text x={x} y={y} fill="#d8d8d8" stroke="#d8d8d8" strokeWidth="2">
      {children}
    </text>
  </g>
)

const ClockFace = () => (
  <Scene viewBox="0 0 773 643">
    <radialGradient id="bevel">
      <stop offset="0.95" stopColor="#1ea51e" />
      <stop offset="0.98" stopColor="#197a19" />
      <stop offset="1" stopColor="#0a300a" />
    </radialGradient>
    <polygon points={ring(209, 48)} fill="#1ea51e" />
    <polygon points={ring(209, 48)} fill="none" stroke="#0a300a" strokeDasharray="2 52" />
    <polygon points={ring(203, 48)} fill="url(#bevel)" stroke="#062806" />
    <polygon points={ring(193, 48)} fill="none" stroke="#1b991b" />
    <Numeral x={389} y={190}>12</Numeral>
    <Numeral x={467} y={216}>1</Numeral>
    <Numeral x={531} y={268}>2</Numeral>
    <circle cx="386" cy="321" r="10" fill="#d8d8d8" stroke="#111" strokeWidth="2" />
  </Scene>
)

const NavigationCube = () => (
  <NavCube width="175" height="165" viewBox="0 0 175 165">
    <g fill="#e1e8ee">
      <path d="M84 17L92 8L101 17ZM84 149H101L92 158ZM17 83L26 75V92ZM158 75L167 83L158 92Z" />
      <rect x="55" y="46" width="74" height="74" rx="11" />
    </g>
    <g fill="none" stroke="#e1e8ee" strokeWidth="5">
      <path d="M71 17Q53 23 41 36" />
      <path d="M114 17Q131 24 143 36" />
    </g>
    <path d="M38 40V30L47 39ZM146 40V30L137 39Z" fill="#e1e8ee" />
    <path d="M59 50L67 58M125 50L117 58M59 116L67 108M125 116L117 108" stroke="#f3f6f9" strokeWidth="10" />
    <rect x="63" y="54" width="58" height="58" rx="6" fill="#f8fafc" />
    <path d="M77 58H107M77 108H107M67 67V99M117 67V99" stroke="#fff" strokeWidth="2" />
    <path d="M66 66V68M66 98V100" stroke="#b4b4ff" />
    <path d="M75 108H77M107 108H109" stroke="#b4f0b4" />
    <text x="92" y="90" textAnchor="middle" fontSize="18" fontFamily="Open Sans, sans-serif">
      Right
    </text>
    <path d="M65 109L56 118M52 119L57 126M57 119L52 126" stroke="#e01010" />
    <path d="M118 134L130 130L141 134V149L130 153L118 149Z" fill="#dedede" />
    <path d="M118 134L130 138V153L118 149Z" fill="#bbb" />
    <path d="M118 134L130 130L141 134L130 138Z" fill="#eee" />
    <path d="M118 134L130 130L141 134V149L130 153L118 149Z" fill="none" stroke="#777" strokeDasharray="2 1" />
    <path d="M145 138H159L152 145Z" fill="#404040" />
  </NavCube>
)

const AxisCross = () => (
  <Axes width="42" height="50" viewBox="0 0 42 50" fontFamily="Liberation Sans, sans-serif" fontSize="10">
    <path d="M10 40V19" stroke="#1f1f86" strokeWidth="2" />
    <path d="M8 23H12V27H8Z" fill="#1f1f86" />
    <path d="M10 40H32" stroke="#1f861f" strokeWidth="2" />
    <path d="M24 38H28V42H24Z" fill="#1f861f" />
    <circle cx="10" cy="40" r="3" fill="#861f1f" />
    <text x="12" y="18">Z</text>
    <text x="12" y="40">X</text>
    <text x="34" y="40">Y</text>
  </Axes>
)

const App = () => (
  <Window>
    <GlobalStyle />
    <Gradients />
    <MenuBar>
      {menus.map((menu) => (
        <button key={menu}>{menu}</button>
      ))}
    </MenuBar>

    <ToolRow>
      <ToolBar>
        <Grip />
        <Tools list={fileTools} />
      </ToolBar>
      <ToolBar>
        <Grip />
        <Workbench>
          <Icon name="draft" size={18} />
          <select aria-label="Workbench">
            <option>Draft</option>
          </select>
          <Icon name="caretDown" size={12} />
        </Workbench>
      </ToolBar>
      <ToolBar $fill>
        <Grip />
        <Tools list={macroTools} />
      </ToolBar>
    </ToolRow>

    <ToolRow>
      <ToolBar>
        <Grip />
        <Tools list={viewTools} />
      </ToolBar>
      <ToolBar>
        <Grip />
        <Tools list="part group" />
      </ToolBar>
      <ToolBar>
        <Grip />
        <TrayGroup>
          <TrayButton $wide>
            <Icon name="side" size={16} />
            Side
          </TrayButton>
          <TrayButton aria-label="Construction mode">
            <Icon name="construct" size={18} />
          </TrayButton>
          <TrayButton aria-label="Line color">
            <Swatch $color="#000" />
          </TrayButton>
          <TrayButton aria-label="Face color">
            <Swatch $color="#ccc" />
          </TrayButton>
          <SpinGroup>
            <SpinBox label="Line width" value="2px" width={48} />
            <SpinBox label="Font size" value="0.2" width={52} />
          </SpinGroup>
          <TrayButton aria-label="Apply style">
            <Icon name="apply" size={16} />
          </TrayButton>
          <TrayButton $wide>
            <Icon name="autogroup" size={16} />
            None
          </TrayButton>
        </TrayGroup>
      </ToolBar>
      <ToolBar $fill>
        <Grip />
        <Tools list={snapTools} />
        <More aria-label="More snap tools">»</More>
      </ToolBar>
    </ToolRow>

    <ToolRow>
      <ToolBar>
        <Grip />
        <Tools list={draftTools} />
      </ToolBar>
      <ToolBar $fill>
        <Grip />
        <Tools list={modTools} />
        <More aria-label="More modification tools">»</More>
      </ToolBar>
    </ToolRow>

    <Main>
      <Dock>
        <DockTitle>
          <span>Combo View</span>
          <button aria-label="Float">
            <Icon name="restore" size={10} />
          </button>
          <button aria-label="Close panel">
            <Icon name="close" size={10} />
          </button>
        </DockTitle>
        <TabRow>
          <Tab $on>Model</Tab>
          <Tab>Tasks</Tab>
        </TabRow>
        <Pane>
          <ModelTree />
          <PropertyEditor />
          <BottomTabs>
            <SlantTab>View</SlantTab>
            <SlantTab $on>Data</SlantTab>
          </BottomTabs>
        </Pane>
      </Dock>
      <Work>
        <Viewport>
          <ClockFace />
          <NavigationCube />
          <AxisCross />
        </Viewport>
        <DocTabs>
          <DocTab>
            <Icon name="freecad" size={16} />
            Clock : 1*
            <DocClose aria-label="Close document">
              <Svg width="8" height="8" viewBox="0 0 8 8">
                <path d="M1 1L7 7M7 1L1 7" stroke="#fff" strokeWidth="2" />
              </Svg>
            </DocClose>
          </DocTab>
        </DocTabs>
      </Work>
    </Main>

    <StatusBar>
      <StatusText>Valid, Internal name: ShapeString002</StatusText>
      <NavStyle>
        <Icon name="mouse" size={14} />
        <span>CAD</span>
        <Icon name="caretDown" size={10} />
      </NavStyle>
      <Dimensions>148.17 mm x 123.25 mm</Dimensions>
      <SizeGrip width="12" height="12" viewBox="0 0 12 12">
        <path d="M8 1H10V3H8ZM4 5H6V7H4ZM8 5H10V7H8ZM0 9H2V11H0ZM4 9H6V11H4ZM8 9H10V11H8Z" fill="#bfbfbf" />
      </SizeGrip>
    </StatusBar>
  </Window>
)

export default App
